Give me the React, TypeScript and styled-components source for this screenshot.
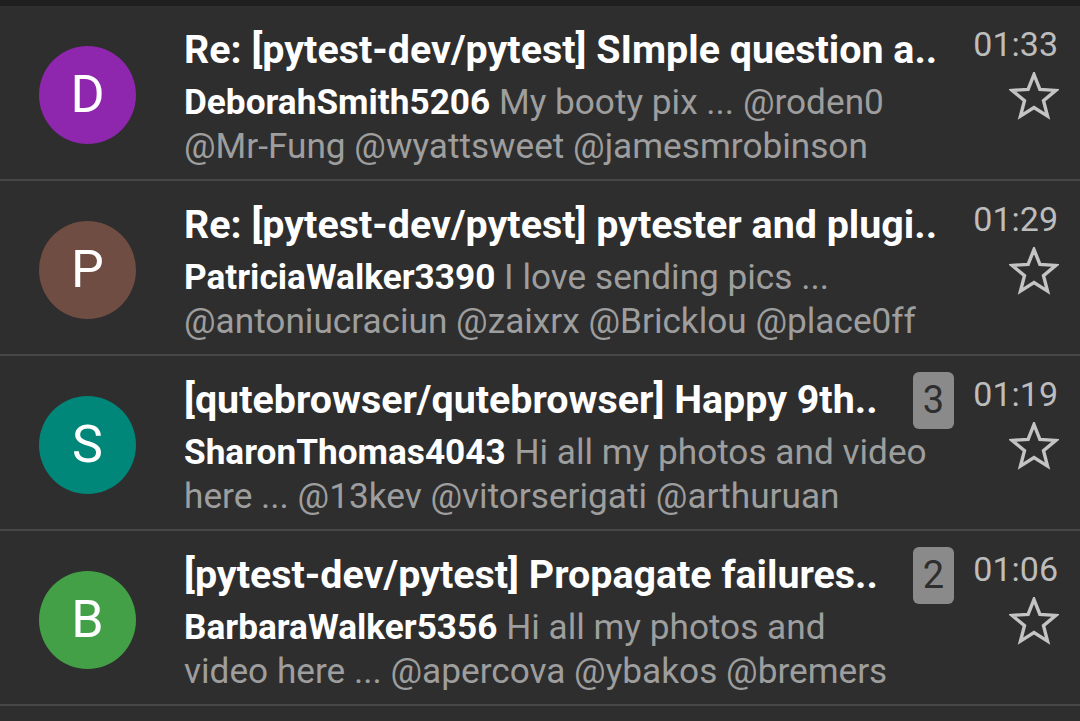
import React from 'react';
import styled, { createGlobalStyle } from 'styled-components';

const GlobalStyle = createGlobalStyle`
  html, body {
    margin: 0;
    padding: 0;
    background: #2e2e2e;
    font-family: Roboto, 'Noto Sans', sans-serif;
    overflow: hidden;
  }
`;

const Screen = styled.div`
  width: 1080px;
  height: 721px;
  background: #2e2e2e;
  border-top: 6px solid #1f1f1f;
  box-sizing: border-box;
`;

const Row = styled.div`
  display: flex;
  align-items: stretch;
  height: 173px;
  border-bottom: 2px solid #474747;
  padding: 0 22px 0 39px;
`;

const AvatarCell = styled.div`
  display: flex;
  align-items: center;
  padding-top: 4px;
  margin-right: 48px;
`;

const Avatar = styled.div<{ $bg: string }>`
  width: 97px;
  height: 98px;
  border-radius: 50%;
  background: ${p => p.$bg};
  color: #ffffff;
  font-size: 52px;
  display: flex;
  align-items: center;
  justify-content: center;
`;

const Main = styled.div`
  flex: 1;
  min-width: 0;
  padding-top: 22px;
`;

const Header = styled.div`
  display: flex;
  align-items: center;
  height: 44px;
  margin-bottom: 8px;
`;

const Title = styled.div`
  flex: 1;
  min-width: 0;
  font-size: 39.4px;
  font-weight: 700;
  line-height: 44px;
  color: #ffffff;
  white-space: nowrap;
`;

const Badge = styled.div`
  flex-shrink: 0;
  width: 41px;
  height: 57px;
  border-radius: 6px;
  background: #8a8a8a;
  color: #2e2e2e;
  font-size: 38px;
  display: flex;
  align-items: center;
  justify-content: center;
  margin-left: 20px;
`;

const Line = styled.div`
  font-size: 35.2px;
  line-height: 44px;
  color: #9e9e9e;
  white-space: nowrap;
`;

const Sender = styled.span`
  color: #ffffff;
  font-weight: 700;
`;

const Side = styled.div`
  width: 86px;
  margin-left: 18px;
  display: flex;
  flex-direction: column;
  align-items: flex-end;
  padding-top: 18px;
`;

const Time = styled.div`
  font-size: 34px;
  line-height: 40px;
  color: #bdbdbd;
  white-space: nowrap;
`;

const StarBox = styled.div`
  margin-top: 8px;
  width: 50px;
  height: 48px;
  margin-right: -1px;
`;

const Star = () => (
  <StarBox>
    <svg width="50" height="48" viewBox="0 0 50 48">
      <polygon
        points="25,2.5 30.88,17.41 46.87,18.39 34.51,28.59 38.52,44.11 25,35.5 11.48,44.11 15.49,28.59 3.13,18.39 19.12,17.41"
        fill="none"
        stroke="#c4c4c4"
        strokeWidth="3.4"
        strokeLinejoin="miter"
      />
    </svg>
  </StarBox>
);

type Mail = {
  letter: string;
  color: string;
  title: string;
  badge?: number;
  time: string;
  sender: string;
  first: string;
  second: string;
};

const mails: Mail[] = [
  {
    letter: 'D',
    color: '#8e27ad',
    title: 'Re: [pytest-dev/pytest] SImple question a..',
    time: '01:33',
    sender: 'DeborahSmith5206',
    first: 'My booty pix ... @roden0',
    second: '@Mr-Fung @wyattsweet @jamesmrobinson',
  },
  {
    letter: 'P',
    color: '#6f4d42',
    title: 'Re: [pytest-dev/pytest] pytester and plugi..',
    time: '01:29',
    sender: 'PatriciaWalker3390',
    first: 'I love sending pics ...',
    second: '@antoniucraciun @zaixrx @Bricklou @place0ff',
  },
  {
    letter: 'S',
    color: '#00877a',
    title: '[qutebrowser/qutebrowser] Happy 9th..',
    badge: 3,
    time: '01:19',
    sender: 'SharonThomas4043',
    first: 'Hi all my photos and video',
    second: 'here ... @13kev @vitorserigati @arthuruan',
  },
  {
    letter: 'B',
    color: '#43a047',
    title: '[pytest-dev/pytest] Propagate failures..',
    badge: 2,
    time: '01:06',
    sender: 'BarbaraWalker5356',
    first: 'Hi all my photos and',
    second: 'video here ... @apercova @ybakos @bremers',
  },
];

const App: React.FC = () => {
  return (
    <>
      <GlobalStyle />
      <Screen>
        {mails.map(m => (
          <Row key={m.time}>
            <AvatarCell>
              <Avatar $bg={m.color}>{m.letter}</Avatar>
            </AvatarCell>
            <Main>
              <Header>
                <Title>{m.title}</Title>
                {m.badge !== undefined && <Badge>{m.badge}</Badge>}
              </Header>
              <Line>
                <Sender>{m.sender}</Sender> {m.first}
              </Line>
              <Line>{m.second}</Line>
            </Main>
            <Side>
              <Time>{m.time}</Time>
              <Star />
            </Side>
          </Row>
        ))}
      </Screen>
    </>
  );
};

export default App;
